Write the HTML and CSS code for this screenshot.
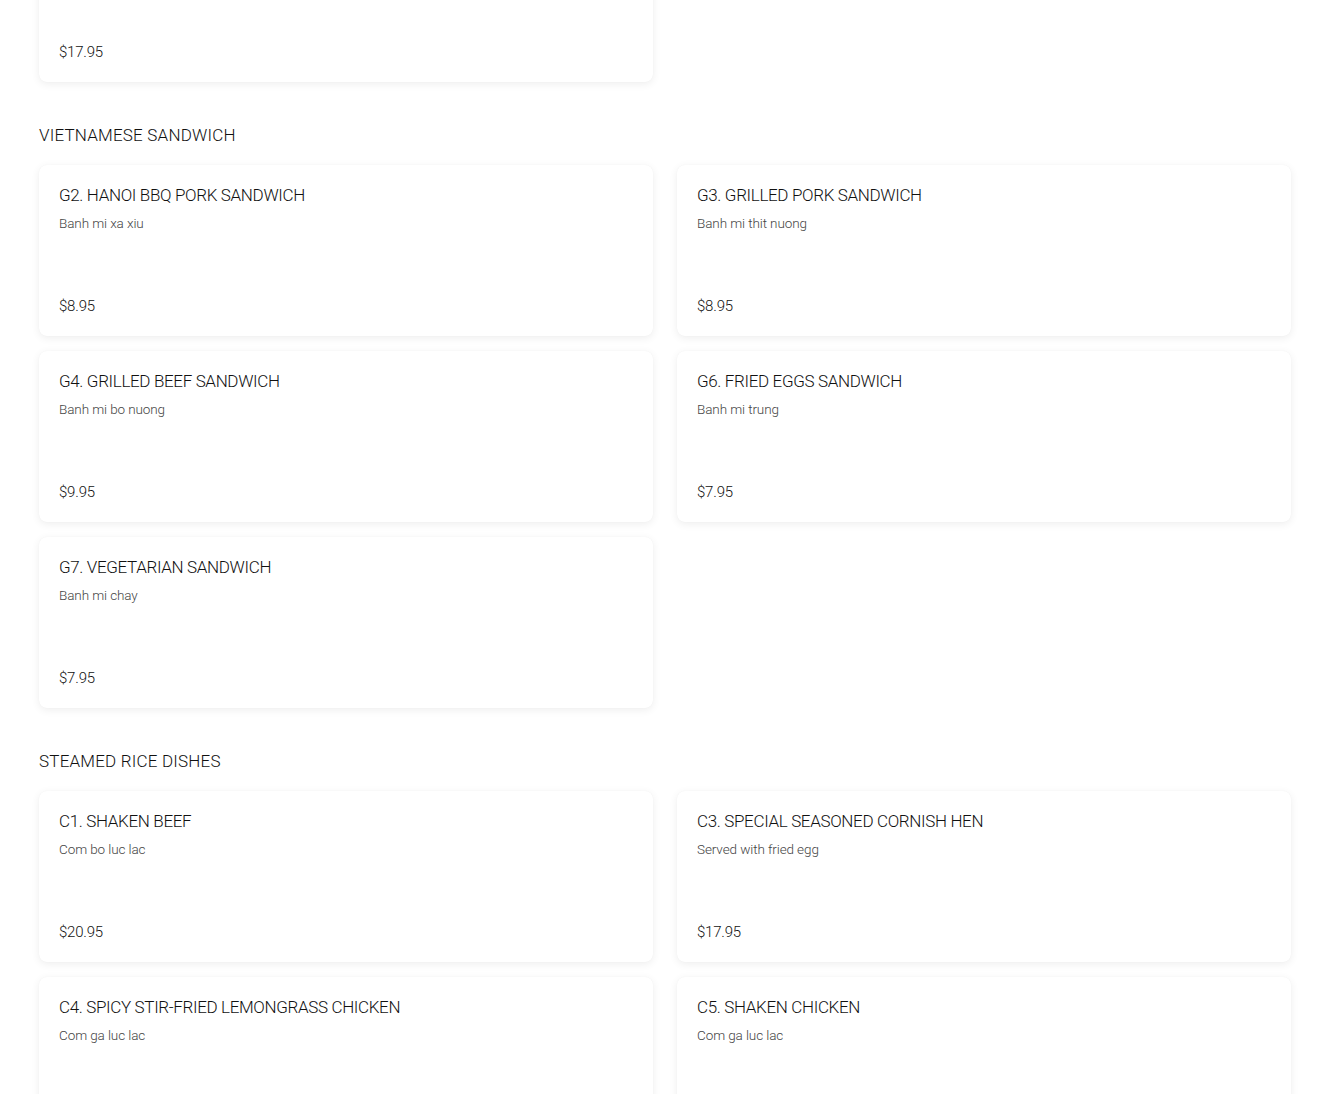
FILE: index.html
```html
<!DOCTYPE html>
<html lang="en">
<head>
<meta charset="utf-8">
<title>Menu</title>
<link rel="stylesheet" href="styles.css">
</head>
<body>
<main class="menu">
  <section class="section section-first">
    <div class="grid">
      <article class="card">
        <p class="item-price">$17.95</p>
      </article>
    </div>
  </section>

  <section class="section">
    <h2 class="section-title">VIETNAMESE SANDWICH</h2>
    <div class="grid">
      <article class="card">
        <h3 class="item-name">G2. HANOI BBQ PORK SANDWICH</h3>
        <p class="item-desc">Banh mi xa xiu</p>
        <p class="item-price">$8.95</p>
      </article>
      <article class="card">
        <h3 class="item-name">G3. GRILLED PORK SANDWICH</h3>
        <p class="item-desc">Banh mi thit nuong</p>
        <p class="item-price">$8.95</p>
      </article>
      <article class="card">
        <h3 class="item-name">G4. GRILLED BEEF SANDWICH</h3>
        <p class="item-desc">Banh mi bo nuong</p>
        <p class="item-price">$9.95</p>
      </article>
      <article class="card">
        <h3 class="item-name">G6. FRIED EGGS SANDWICH</h3>
        <p class="item-desc">Banh mi trung</p>
        <p class="item-price">$7.95</p>
      </article>
      <article class="card">
        <h3 class="item-name">G7. VEGETARIAN SANDWICH</h3>
        <p class="item-desc">Banh mi chay</p>
        <p class="item-price">$7.95</p>
      </article>
    </div>
  </section>

  <section class="section">
    <h2 class="section-title">STEAMED RICE DISHES</h2>
    <div class="grid">
      <article class="card">
        <h3 class="item-name">C1. SHAKEN BEEF</h3>
        <p class="item-desc">Com bo luc lac</p>
        <p class="item-price">$20.95</p>
      </article>
      <article class="card">
        <h3 class="item-name">C3. SPECIAL SEASONED CORNISH HEN</h3>
        <p class="item-desc">Served with fried egg</p>
        <p class="item-price">$17.95</p>
      </article>
      <article class="card">
        <h3 class="item-name">C4. SPICY STIR-FRIED LEMONGRASS CHICKEN</h3>
        <p class="item-desc">Com ga luc lac</p>
      </article>
      <article class="card">
        <h3 class="item-name">C5. SHAKEN CHICKEN</h3>
        <p class="item-desc">Com ga luc lac</p>
      </article>
    </div>
  </section>
</main>
</body>
</html>
```
FILE: styles.css
```css
html, body {
  margin: 0;
  padding: 0;
  background: #fff;
  overflow: hidden;
}
body {
  font-family: Roboto, "Liberation Sans", sans-serif;
  font-weight: 300;
  color: #111;
}
.menu {
  padding: 0 39px;
}
.section-first {
  margin-top: -89px;
}
.section-title {
  margin: 41px 0 18px;
  font-size: 17px;
  line-height: 24px;
  font-weight: 300;
  letter-spacing: 0.2px;
  color: #111;
}
.grid {
  display: grid;
  grid-template-columns: 1fr 1fr;
  column-gap: 24px;
  row-gap: 15px;
}
.card {
  height: 171px;
  box-sizing: border-box;
  padding: 20px;
  background: #fff;
  border-radius: 8px;
  box-shadow: 0 2px 8px rgba(0, 0, 0, 0.07), 0 0 1px rgba(0, 0, 0, 0.05);
  display: flex;
  flex-direction: column;
}
.item-name {
  margin: 0;
  font-size: 17px;
  line-height: 20px;
  font-weight: 300;
  letter-spacing: -0.35px;
  color: #111;
}
.item-desc {
  margin: 8px 0 0;
  font-size: 13.5px;
  line-height: 20px;
  letter-spacing: -0.1px;
  color: #444;
}
.item-price {
  margin: auto 0 0;
  font-size: 15px;
  line-height: 20px;
  letter-spacing: -0.2px;
  color: #111;
}
```
